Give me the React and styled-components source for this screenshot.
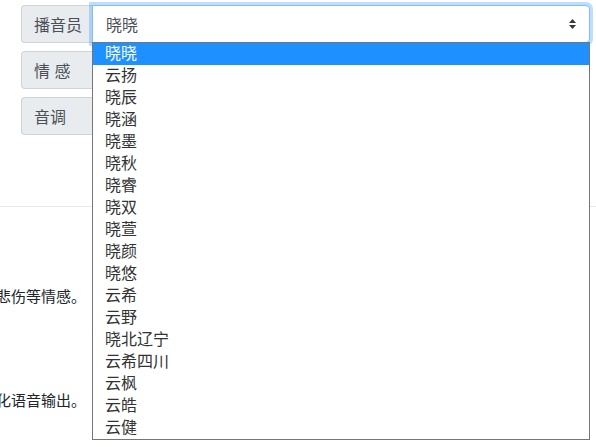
import React from "react";
import styled, { createGlobalStyle } from "styled-components";

const GlobalStyle = createGlobalStyle`
  body {
    margin: 0;
    background: #fff;
    font-family: "Liberation Sans", "Noto Sans CJK SC", sans-serif;
    color: #212529;
  }
`;

const Page = styled.div`
  width: 596px;
  height: 447px;
  overflow: hidden;
`;

const Form = styled.div`
  padding: 5px 6px 0 21px;
  display: flex;
  flex-direction: column;
  gap: 8px;
`;

const InputGroup = styled.div`
  display: flex;
  height: 38px;
  position: relative;
  z-index: ${({ open }) => (open ? 2 : 1)};
`;

const Label = styled.div`
  box-sizing: border-box;
  width: 71px;
  display: flex;
  align-items: center;
  padding: 0 12px;
  font-size: 16px;
  color: #495057;
  background: #e9ecef;
  border: 1px solid #ced4da;
  border-right: none;
  border-radius: 4px 0 0 4px;
  white-space: pre;
`;

const SelectBox = styled.div`
  position: relative;
  flex: 1;
  box-sizing: border-box;
  display: flex;
  align-items: center;
  justify-content: space-between;
  padding: 0 12px 0 13px;
  font-size: 16px;
  color: #495057;
  background: #fff;
  border: 1px solid ${({ focused }) => (focused ? "#80bdff" : "#ced4da")};
  border-radius: 0 4px 4px 0;
  box-shadow: ${({ focused }) =>
    focused ? "0 0 0 3px rgba(0, 123, 255, 0.25)" : "none"};
`;

const Menu = styled.ul`
  position: absolute;
  top: 37px;
  left: 71px;
  width: 498px;
  box-sizing: border-box;
  margin: 0;
  padding: 0;
  list-style: none;
  background: #fff;
  border: 1px solid #767676;
`;

const Option = styled.li`
  height: 22px;
  line-height: 22px;
  padding-left: 12px;
  font-size: 16px;
  color: ${({ active }) => (active ? "#fff" : "#333")};
  background: ${({ active }) => (active ? "#1e90ff" : "transparent")};
`;

const Divider = styled.hr`
  margin: 71px 0 0;
  border: 0;
  border-top: 1px solid #e6e8ea;
`;

const Line = styled.div`
  display: flex;
  justify-content: flex-end;
  width: 86px;
  overflow: hidden;
  margin-top: ${({ top }) => top}px;
  font-size: 15px;
  line-height: 20px;
  color: #212529;
  white-space: nowrap;
`;

function UpDown() {
  return (
    <svg width="9" height="12" viewBox="0 0 9 12">
      <path d="M4.5 1 L8 5 L1 5 Z" fill="#343a40" />
      <path d="M4.5 11 L8 7 L1 7 Z" fill="#343a40" />
    </svg>
  );
}

const voices = [
  "晓晓", "云扬", "晓辰", "晓涵", "晓墨", "晓秋", "晓睿", "晓双", "晓萱",
  "晓颜", "晓悠", "云希", "云野", "晓北辽宁", "云希四川", "云枫", "云皓", "云健",
];

export default function App() {
  return (
    <Page>
      <GlobalStyle />
      <Form>
        <InputGroup open>
          <Label>播音员</Label>
          <SelectBox focused>
            <span>晓晓</span>
            <UpDown />
          </SelectBox>
          <Menu>
            {voices.map((v, i) => (
              <Option key={v} active={i === 0}>
                {v}
              </Option>
            ))}
          </Menu>
        </InputGroup>
        <InputGroup>
          <Label>情 感</Label>
          <SelectBox>
            <span />
            <UpDown />
          </SelectBox>
        </InputGroup>
        <InputGroup>
          <Label>音调</Label>
          <SelectBox>
            <span />
            <UpDown />
          </SelectBox>
        </InputGroup>
      </Form>
      <Divider />
      <Line top={80}>支持开心、悲伤等情感。</Line>
      <Line top={84}>实现个性化语音输出。</Line>
    </Page>
  );
}
